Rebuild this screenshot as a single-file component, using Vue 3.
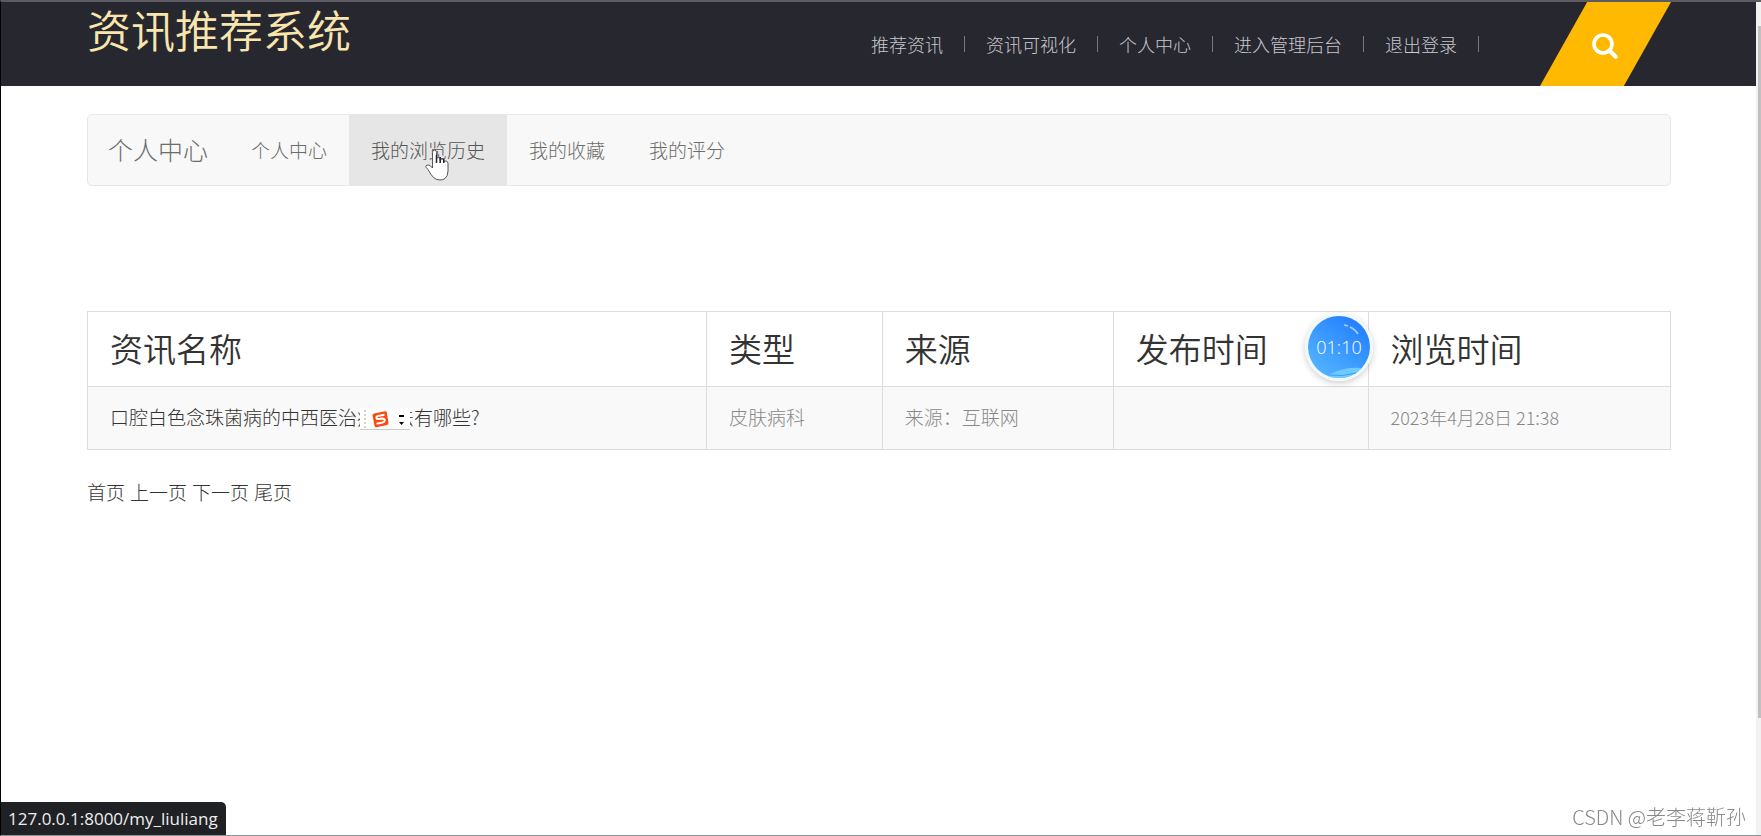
<script setup>
import { ref } from 'vue'

const topLinks = ['推荐资讯', '资讯可视化', '个人中心', '进入管理后台', '退出登录']
const tabs = ['个人中心', '我的浏览历史', '我的收藏', '我的评分']
const activeTab = ref('我的浏览历史')

const columns = ['资讯名称', '类型', '来源', '发布时间', '浏览时间']
const rows = [
  {
    name: '口腔白色念珠菌病的中西医治疗方法有哪些?',
    type: '皮肤病科',
    source: '来源：互联网',
    published: '',
    viewed: '2023年4月28日 21:38',
  },
]
const pages = ['首页', '上一页', '下一页', '尾页']
</script>

<template>
  <div class="page">
    <header class="header">
      <h1 class="logo">资讯推荐系统</h1>
      <nav class="top-nav">
        <a v-for="link in topLinks" :key="link" href="#">{{ link }}</a>
      </nav>
      <button class="search-btn" type="button" aria-label="搜索">
        <svg viewBox="0 0 26 26" width="26" height="26">
          <circle cx="11" cy="11" r="9" fill="none" stroke="#fff" stroke-width="3.6" />
          <path d="M17.5 17.5L23.7 23.7" stroke="#fff" stroke-width="4.2" stroke-linecap="round" />
        </svg>
      </button>
    </header>

    <main class="main">
      <nav class="navbar">
        <a class="brand" href="#">个人中心</a>
        <a
          v-for="tab in tabs"
          :key="tab"
          class="tab"
          :class="{ active: tab === activeTab }"
          href="#"
          @click.prevent="activeTab = tab"
        >{{ tab }}</a>
      </nav>

      <table class="history">
        <colgroup>
          <col class="col-name" />
          <col class="col-type" />
          <col class="col-source" />
          <col class="col-published" />
          <col class="col-viewed" />
        </colgroup>
        <thead>
          <tr>
            <th v-for="column in columns" :key="column" scope="col">{{ column }}</th>
          </tr>
        </thead>
        <tbody>
          <tr v-for="row in rows" :key="row.name">
            <td><a href="#">{{ row.name }}</a></td>
            <td>{{ row.type }}</td>
            <td>{{ row.source }}</td>
            <td class="date">{{ row.published }}</td>
            <td class="date">{{ row.viewed }}</td>
          </tr>
        </tbody>
      </table>

      <div class="pager">
        <a v-for="page in pages" :key="page" href="#">{{ page }}</a>
      </div>
    </main>

    <div class="scrollbar"><div class="thumb"></div></div>

    <div class="ime-bar">
      <svg viewBox="0 0 50 22" width="50" height="22">
        <path d="M5 2V21" stroke="#aaa" stroke-width="1" stroke-dasharray="2 2" />
        <path d="M0 21.5H50" stroke="#ccc" />
        <path d="M14 5.5L25 3.2Q26.500 3 26.800 4.500L28.500 15Q28.500 16.500 27 17L16.500 19.200Q15 19.300 14.600 18L12.500 7.500Q12.500 6 14 5.500Z" fill="#fc4a0f" />
        <path d="M24.500 6.800L18 8Q16 8.600 16.500 10.200Q17 11.400 19 11L22.500 10.500Q24.800 10.600 24.700 12.500Q24.500 14 22.500 14.500L16.500 15.700" fill="none" stroke="#fff" stroke-width="2" />
        <path d="M39 7H44V9H39ZM39 14H44L41.500 17Z" fill="#000" />
      </svg>
    </div>

    <div class="timer">
      <svg class="timer-face" viewBox="0 0 62 62" width="62" height="62">
        <defs>
          <linearGradient id="face" x1="0.8" y1="0.1" x2="0.2" y2="0.9">
            <stop offset="0" stop-color="#2580ff" />
            <stop offset="1" stop-color="#50b2ff" />
          </linearGradient>
        </defs>
        <circle cx="31" cy="31" r="31" fill="url(#face)" />
        <path d="M19 59.500Q36 50 54 52Q44 62 31 62Q24 62 19 59.500Z" fill="#6ecbff" />
        <path d="M20 59Q35 61 48 57" fill="none" stroke="#3b9dff" stroke-width="1" />
        <path d="M36 9L40 10M42 11Q47 13 50 18" fill="none" stroke="#a8d4ff" stroke-width="1.500" />
      </svg>
      <span>01:10</span>
    </div>

    <svg class="cursor" viewBox="0 0 24 32" width="24" height="32">
      <path
        d="M7.500 19V3.500Q7.500 1 9.500 1T11.500 3.500V10Q11.500 8.500 13.300 8.500T15.200 10.500V11.500Q15.300 10 17 10T18.800 12V13Q19 11.500 21 12T23 14.500V22Q23 27 20 29.500Q18 31 15 31Q11 31 8.500 28.500Q6 26 3 20.500L1.200 18.500Q.3 17 1.800 16.200Q4 15.500 5.500 17Z"
        fill="#fff"
        stroke="#555"
      />
      <path d="M11.500 6V14M15.200 8V14M18.800 10V14" stroke="#223" stroke-width="1.500" />
    </svg>

    <div class="status">127.0.0.1:8000/my_liuliang</div>
    <div class="watermark">CSDN @老李蒋靳孙</div>
  </div>
</template>

<style>
body {
  margin: 0;
  background: #fff;
}
</style>

<style scoped>
.page {
  box-sizing: border-box;
  min-height: 100vh;
  padding-right: 5px;
  border-top: 2px solid #5c5b62;
  border-bottom: 1px solid #8f9597;
  border-left: 1px solid #000;
  color: #333;
  font-family: "Noto Sans CJK SC", sans-serif;
  font-size: 19px;
  font-weight: 300;
  line-height: 28px;
}

a {
  color: inherit;
  text-decoration: none;
}

.header {
  display: flex;
  height: 84px;
  padding: 0 85px 0 86px;
  background: #272730;
}

.logo {
  margin: 0 auto 0 0;
  color: #f9e6ae;
  font-size: 44px;
  font-weight: 350;
  line-height: 54px;
}

.top-nav {
  display: flex;
  align-items: center;
  margin-right: 61px;
  color: #c8c8ce;
  font-size: 18px;
  line-height: 16px;
}

.top-nav a {
  padding: 0 21px;
  border-right: 1px solid #77777e;
}

.search-btn {
  display: flex;
  width: 131px;
  align-items: center;
  justify-content: center;
  padding: 4px 2px 0 0;
  border: 0;
  background: #ffb901;
  clip-path: polygon(36% 0, 100% 0, 64% 100%, 0 100%);
}

.main {
  padding: 28px 85px 0 86px;
}

.navbar {
  display: flex;
  height: 70px;
  margin-bottom: 125px;
  border: 1px solid #e7e7e7;
  border-radius: 5px;
  background: #f8f8f8;
  color: #6c6c6c;
  line-height: 70px;
}

.brand {
  padding: 0 21px 0 20px;
  font-size: 25px;
  line-height: 68px;
}

.tab {
  padding: 0 22px;
}

.tab.active {
  background: #e6e6e6;
  color: #555;
}

.history {
  width: 100%;
  border: 1px solid #ddd;
  border-collapse: collapse;
  table-layout: fixed;
}

.col-name {
  width: 39.1%;
}

.col-type {
  width: 11.1%;
}

.col-source {
  width: 14.6%;
}

.col-published {
  width: 16.1%;
}

th,
td {
  padding: 16px 22px 18px;
  border: 1px solid #ddd;
  text-align: left;
}

th {
  font-size: 33px;
  font-weight: 350;
  line-height: 40px;
}

td {
  background: #f9f9f9;
  color: #888;
}

td a {
  color: #333;
}

.date {
  font-size: 18px;
}

.pager {
  display: flex;
  gap: 5px;
  margin-top: 28px;
}

.scrollbar {
  position: fixed;
  top: 2px;
  right: 0;
  bottom: 1px;
  box-sizing: border-box;
  width: 5px;
  padding: 24px 0 0 2px;
  background: #f1f1f1;
}

.thumb {
  height: 85.5%;
  background: #c1c1c1;
}

.ime-bar {
  position: absolute;
  top: 408px;
  left: 360px;
  width: 50px;
  height: 22px;
  background: #fff;
}

.ime-bar svg {
  display: block;
}

.timer {
  position: absolute;
  top: 313px;
  left: 1305px;
  box-sizing: border-box;
  width: 68px;
  height: 68px;
  border: 3px solid #f2f8ff;
  border-radius: 50%;
  box-shadow: 0 2px 6px rgba(0, 0, 0, 0.2);
  color: #fff;
  font-family: "Open Sans", sans-serif;
  font-size: 18px;
  line-height: 62px;
  text-align: center;
}

.timer-face {
  position: absolute;
  top: 0;
  left: 0;
}

.timer span {
  position: relative;
}

.cursor {
  position: absolute;
  top: 149px;
  left: 425px;
}

.status {
  position: fixed;
  bottom: 1px;
  left: 1px;
  padding: 0 8px 0 7px;
  border-top-right-radius: 5px;
  background: #202124;
  color: #eee;
  font-family: "Open Sans", sans-serif;
  font-size: 17px;
  font-weight: 400;
  line-height: 33px;
}

.watermark {
  position: fixed;
  right: 15px;
  bottom: 5px;
  color: #888;
  font-size: 20px;
}
</style>
